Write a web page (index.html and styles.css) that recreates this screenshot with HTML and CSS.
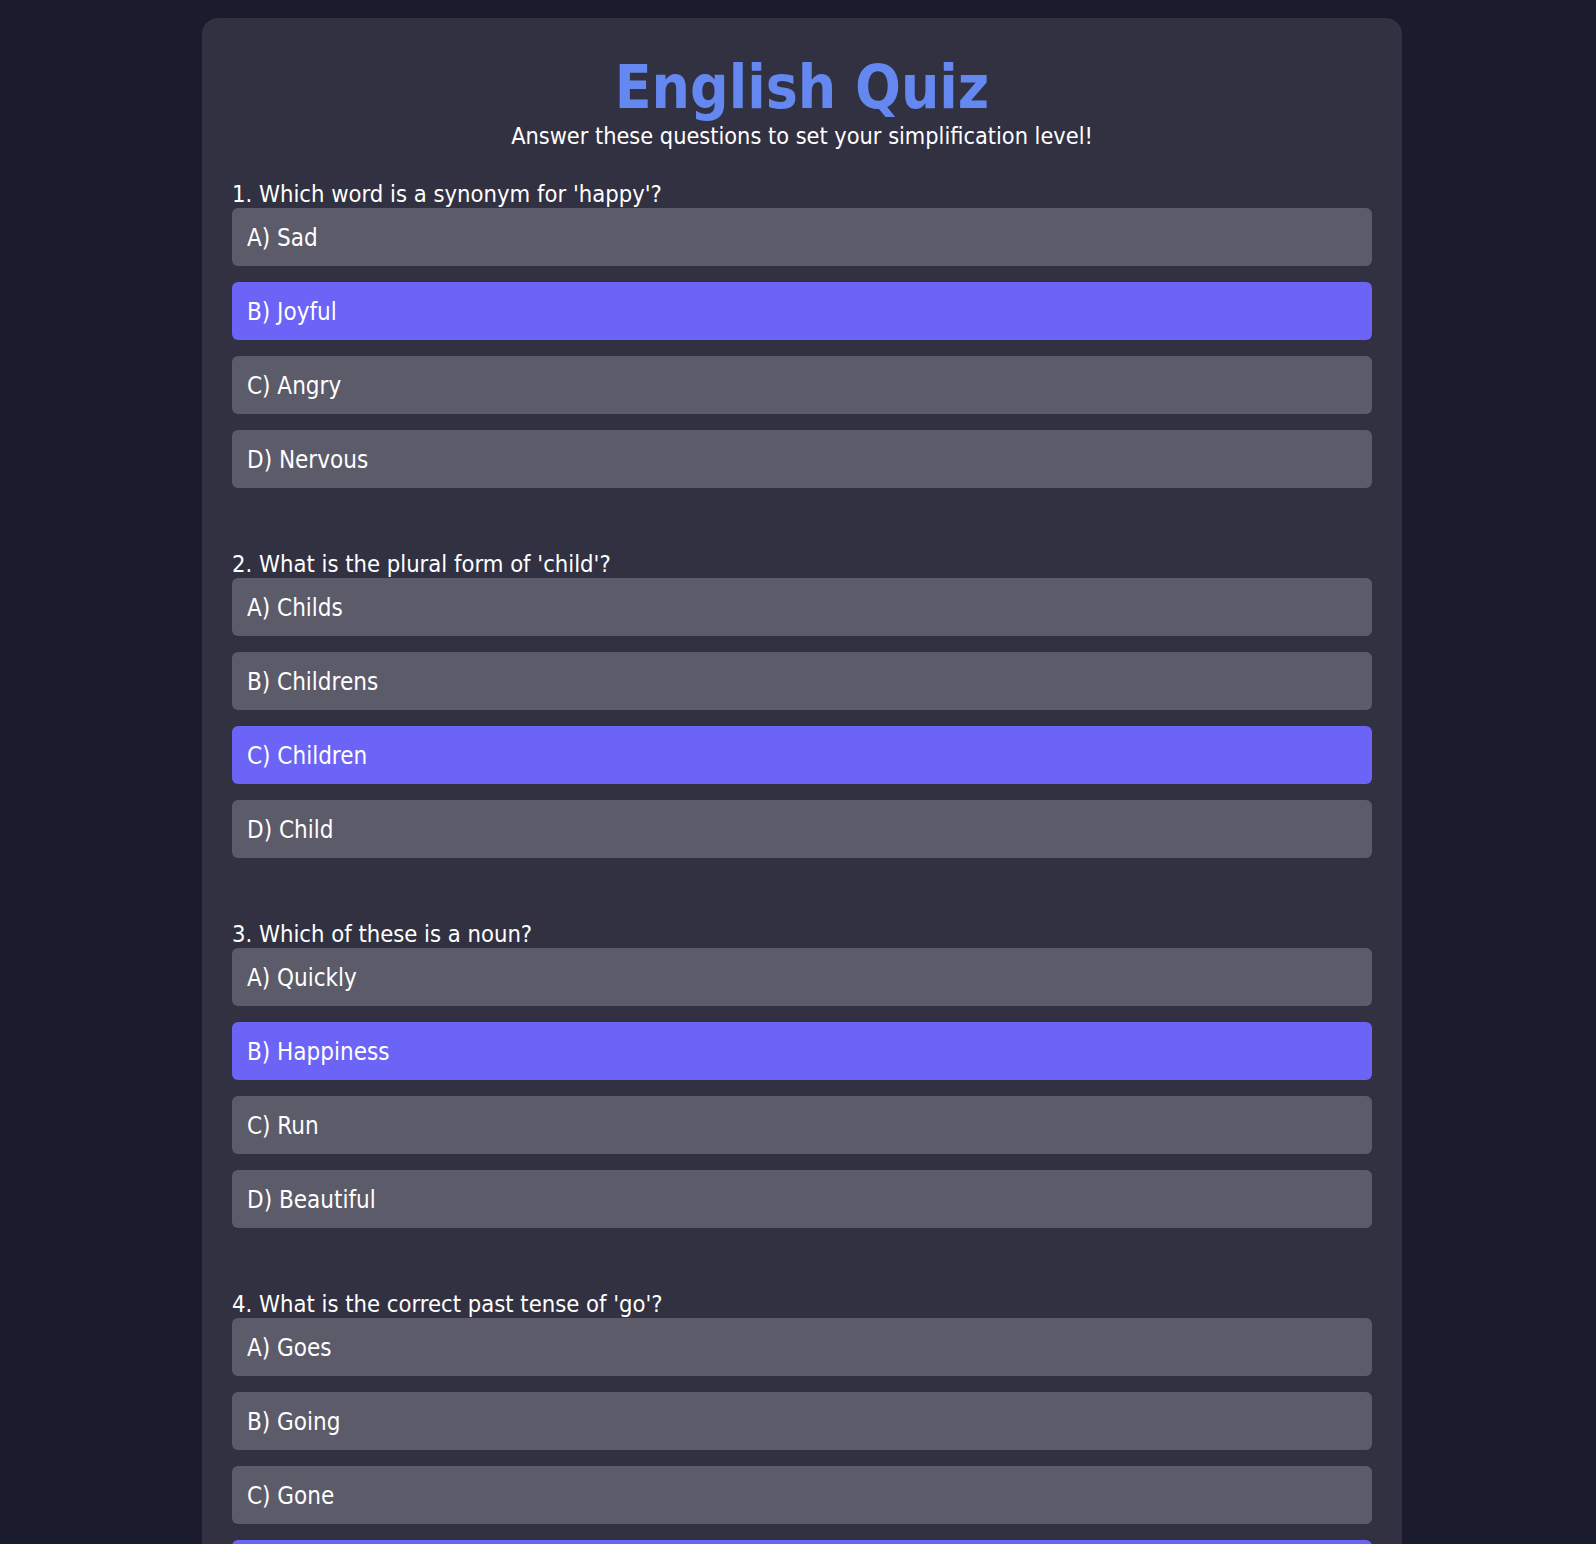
FILE: index.html
```html
<!DOCTYPE html>
<html lang="en">
<head>
<meta charset="utf-8">
<title>English Quiz</title>
<link rel="stylesheet" href="styles.css">
</head>
<body>
<div class="page">
  <main class="quiz">
    <header class="quiz-header">
      <h1 class="quiz-title">English Quiz</h1>
      <p class="quiz-subtitle">Answer these questions to set your simplification level!</p>
    </header>

    <section class="question">
      <div class="question-text">1. Which word is a synonym for 'happy'?</div>
      <div class="options">
        <div class="option">A) Sad</div>
        <div class="option selected">B) Joyful</div>
        <div class="option">C) Angry</div>
        <div class="option">D) Nervous</div>
      </div>
    </section>

    <section class="question">
      <div class="question-text">2. What is the plural form of 'child'?</div>
      <div class="options">
        <div class="option">A) Childs</div>
        <div class="option">B) Childrens</div>
        <div class="option selected">C) Children</div>
        <div class="option">D) Child</div>
      </div>
    </section>

    <section class="question">
      <div class="question-text">3. Which of these is a noun?</div>
      <div class="options">
        <div class="option">A) Quickly</div>
        <div class="option selected">B) Happiness</div>
        <div class="option">C) Run</div>
        <div class="option">D) Beautiful</div>
      </div>
    </section>

    <section class="question">
      <div class="question-text">4. What is the correct past tense of 'go'?</div>
      <div class="options">
        <div class="option">A) Goes</div>
        <div class="option">B) Going</div>
        <div class="option">C) Gone</div>
        <div class="option selected">D) Went</div>
      </div>
    </section>
  </main>
</div>
</body>
</html>
```

FILE: styles.css
```css
html, body {
  margin: 0;
  padding: 0;
  background: #1b1b2e;
}

body {
  font-family: "DejaVu Sans Condensed", "DejaVu Sans", sans-serif;
  color: #ffffff;
}

.page {
  padding: 18px 0 40px 8px;
}

.quiz {
  box-sizing: border-box;
  max-width: 1200px;
  margin: 0 auto;
  padding: 30px;
  background: #323142;
  border-radius: 16px;
}

.quiz-header {
  text-align: center;
  margin-bottom: 30px;
}

.quiz-title {
  margin: 4px 0 0;
  font-size: 60px;
  line-height: 70px;
  font-weight: bold;
  color: #6487f0;
}

.quiz-subtitle {
  margin: 0;
  font-size: 23.3px;
  line-height: 28px;
  color: #ffffff;
}

.question {
  margin-bottom: 46px;
}

.question-text {
  font-size: 23.6px;
  line-height: 28px;
  color: #ffffff;
}

.options {
  display: flex;
  flex-direction: column;
}

.option {
  box-sizing: border-box;
  height: 58.4px;
  margin-bottom: 15.6px;
  padding: 16px 15px 14px;
  font-size: 24px;
  line-height: 28.4px;
  background: #5c5b69;
  border-radius: 6px;
  color: #ffffff;
}

.option.selected {
  background: #6c64f6;
}
```
